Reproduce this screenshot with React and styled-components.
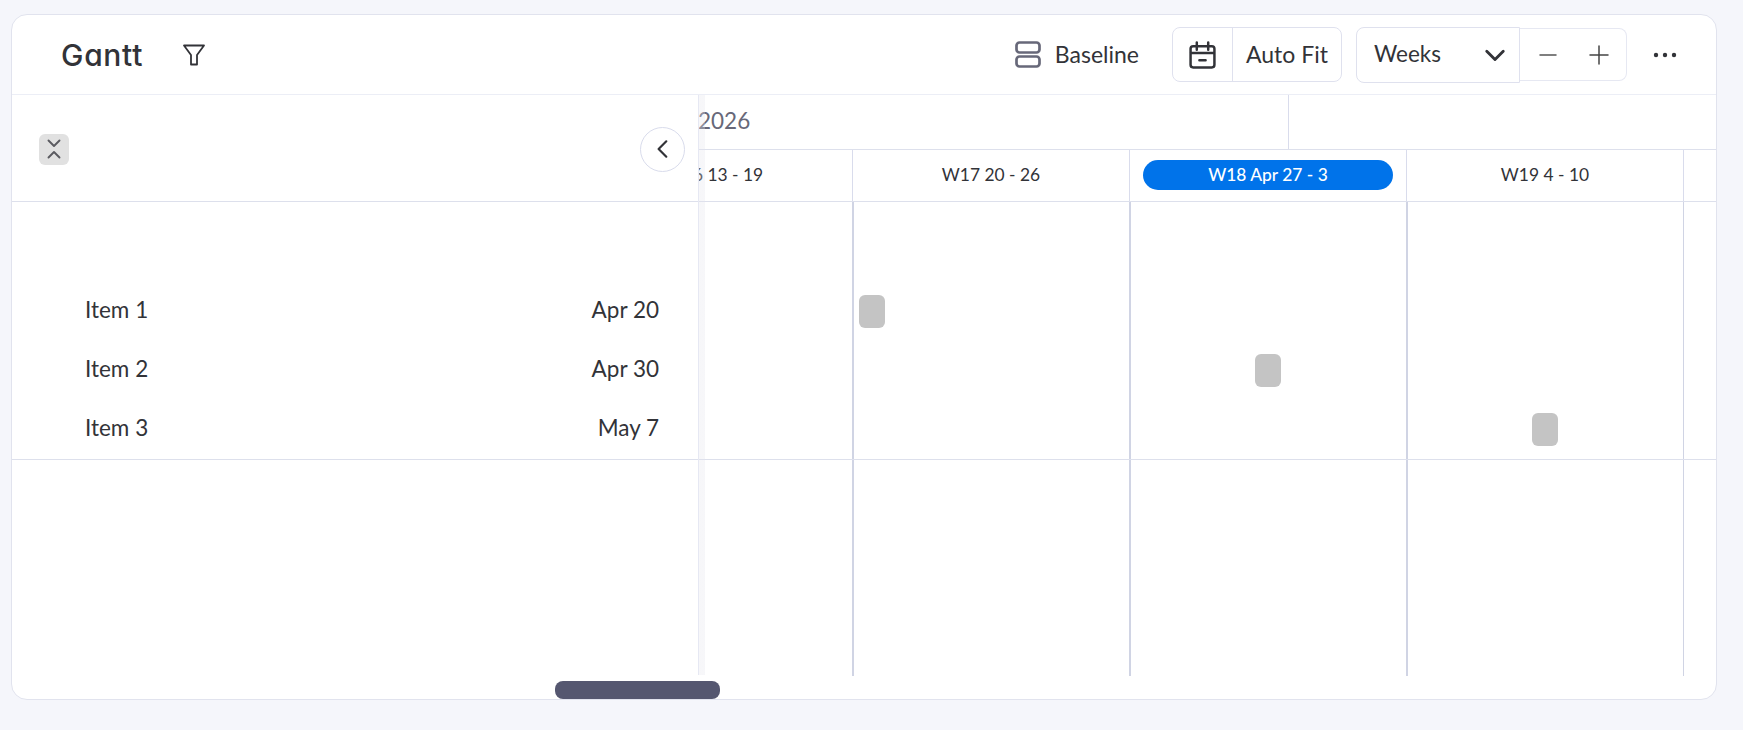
import styled, { createGlobalStyle } from "styled-components";

const GlobalStyle = createGlobalStyle`
  body {
    margin: 0;
    background: #f5f6fb;
    font-family: "Lato", "Liberation Sans", sans-serif;
    color: #323338;
  }
`

const Page = styled.div`
  padding: 14px 26px 30px 11px;
`
const Card = styled.div`
  position: relative;
  height: 686px;
  box-sizing: border-box;
  background: #fff;
  border: 1px solid #e1e3ee;
  border-radius: 16px;
  overflow: hidden;
`
const Header = styled.div`
  display: flex;
  align-items: center;
  height: 80px;
  box-sizing: border-box;
  border-bottom: 1px solid #eceef6;
  padding: 0 38px 0 49px;
`
const Title = styled.h1`
  margin: 0;
  width: 83px;
  font-family: "Inter", sans-serif;
  font-feature-settings: "cv11";
  font-size: 30px;
  font-weight: 500;
  letter-spacing: 0.7px;
`
const IconButton = styled.div`
  display: flex;
  align-items: center;
  justify-content: center;
  margin-left: ${(p) => p.$left || 0}px;
`
const Tools = styled.div`
  display: flex;
  align-items: center;
  margin-left: auto;
`
const Baseline = styled.div`
  display: flex;
  align-items: center;
  gap: 14px;
  font-size: 23px;
  margin-right: 33px;
`
const ToolLabel = styled.span`
  padding-bottom: 2px;
`
const AutoFit = styled.div`
  display: flex;
  height: 55px;
  box-sizing: border-box;
  border: 1px solid #dfe1ee;
  border-radius: 8px;
  margin-right: 14px;
`
const CalendarCell = styled.div`
  display: flex;
  align-items: center;
  justify-content: center;
  width: 59px;
  border-right: 1px solid #dfe1ee;
`
const FitLabel = styled.div`
  display: flex;
  align-items: center;
  justify-content: center;
  width: 108px;
  font-size: 23px;
`
const WeeksSelect = styled.div`
  display: flex;
  align-items: center;
  justify-content: space-between;
  width: 164px;
  height: 56px;
  box-sizing: border-box;
  border: 1px solid #dfe1ee;
  border-radius: 8px 0 0 8px;
  padding: 0 13px 0 17px;
  font-size: 22.5px;
`
const ZoomBox = styled.div`
  display: flex;
  align-items: center;
  justify-content: space-between;
  width: 107px;
  height: 53px;
  box-sizing: border-box;
  border: 1px solid #e6e8f2;
  border-left: 0;
  border-radius: 0 8px 8px 0;
  padding: 0 17px 0 18px;
`
const Body = styled.div`
  display: flex;
  height: 604px;
`
const LeftPanel = styled.div`
  width: 686px;
  flex-shrink: 0;
`
const LeftHead = styled.div`
  display: flex;
  align-items: center;
  justify-content: space-between;
  height: 107px;
  box-sizing: border-box;
  border-bottom: 1px solid #dde0ec;
  padding: 2px 13px 0 27px;
`
const CollapseButton = styled.div`
  display: flex;
  align-items: center;
  justify-content: center;
  width: 30px;
  height: 31px;
  border-radius: 6px;
  background: #e1e1e1;
`
const BackButton = styled.div`
  display: flex;
  align-items: center;
  justify-content: center;
  width: 45px;
  height: 45px;
  box-sizing: border-box;
  background: #fff;
  border: 1px solid #d9dcec;
  border-radius: 50%;
  position: relative;
  z-index: 3;
`
const Rows = styled.div`
  margin-top: 79px;
  padding-bottom: 1px;
  border-bottom: 1px solid #dde0ec;
`
const ItemRow = styled.div`
  display: flex;
  align-items: center;
  justify-content: space-between;
  height: 59px;
  box-sizing: border-box;
  padding: 0 39px 2px 73px;
  font-size: 22.5px;
`
const Timeline = styled.div`
  position: relative;
  flex: 1;
  min-width: 0;
  overflow: hidden;
  &::before {
    content: "";
    position: absolute;
    top: 0;
    bottom: 24px;
    left: -1px;
    width: 8px;
    z-index: 2;
    background: linear-gradient(to right, #e6e8f3 2px, rgba(228, 228, 236, 0.3) 2px);
  }
`
const YearRow = styled.div`
  display: flex;
  height: 55px;
  box-sizing: border-box;
  border-bottom: 1px solid #dde0ec;
`
const YearCell = styled.div`
  display: flex;
  align-items: center;
  width: 591px;
  box-sizing: border-box;
  border-right: 1px solid #d9dcec;
  padding: 0 0 3px 0;
  font-size: 22.5px;
  color: #676879;
`
const Track = styled.div`
  margin-left: -122px;
  width: 1385px;
`
const WeekRow = styled.div`
  display: grid;
  grid-template-columns: repeat(5, 277px);
  height: 52px;
  box-sizing: border-box;
  border-bottom: 1px solid #dde0ec;
`
const WeekCell = styled.div`
  display: flex;
  align-items: center;
  justify-content: center;
  box-sizing: border-box;
  border-right: 1px solid #d9dcec;
  padding-bottom: 2px;
  font-size: 17.4px;
`
const CurrentWeek = styled.div`
  display: flex;
  align-items: center;
  justify-content: center;
  width: 250px;
  height: 30px;
  border-radius: 15px;
  background: #0073ea;
  color: #fff;
  font-weight: 500;
`
const GridLines = styled.div`
  display: grid;
  grid-template-columns: repeat(5, 277px);
  height: 474px;
`
const GridColumn = styled.div`
  box-sizing: border-box;
  border-right: ${(p) => (p.$thin ? "1px" : "2px")} solid #d0d4e4;
  margin-right: ${(p) => (p.$thin ? 0 : -1)}px;
`
const BarLayer = styled.div`
  position: absolute;
  left: 0;
  right: 0;
  top: 187px;
  border-bottom: 1px solid #dde0ec;
`
const BarRow = styled.div`
  display: flex;
  align-items: center;
  height: 59px;
`
const Bar = styled.div`
  width: 26px;
  height: 33px;
  border-radius: 6px;
  background: #c4c4c4;
  margin-left: ${(p) => p.$left}px;
`
const ScrollThumb = styled.div`
  position: absolute;
  left: 543px;
  bottom: 0;
  width: 165px;
  height: 18px;
  border-radius: 8px;
  background: #555770;
  z-index: 4;
`

const items = [
  { name: "Item 1", date: "Apr 20", left: 161 },
  { name: "Item 2", date: "Apr 30", left: 557 },
  { name: "Item 3", date: "May 7", left: 834 },
]

const weeks = ["W16 13 - 19", "W17 20 - 26", "W18 Apr 27 - 3", "W19 4 - 10", ""]

const FilterIcon = () => (
  <svg width="24" height="24" viewBox="0 0 24 24" fill="none" stroke="#323338" strokeWidth="1.8" strokeLinejoin="round">
    <path d="M2 2.5h20l-7 9.5v9.5H9V12z" />
  </svg>
)

const BaselineIcon = () => (
  <svg width="26" height="27" viewBox="0 0 26 27" fill="none" stroke="#676879" strokeWidth="2.7">
    <rect x="1.5" y="1.5" width="23" height="10" rx="3" />
    <rect x="1.5" y="15.5" width="23" height="10" rx="3" />
  </svg>
)

const CalendarIcon = () => (
  <svg width="27" height="28" viewBox="0 0 26 27" fill="none" stroke="#323338" strokeWidth="2.4" strokeLinecap="round">
    <rect x="1.5" y="5" width="23" height="20.5" rx="2.5" />
    <path d="M7.5 1.5v7M18.5 1.5v7M2 11.5h22M10 18.5h6" />
  </svg>
)

const Chevron = ({ d, size = 20, width = 2, color = "#323338" }) => (
  <svg width={size} height={size} viewBox="0 0 20 20" fill="none" stroke={color} strokeWidth={width} strokeLinecap="round" strokeLinejoin="round">
    <path d={d} />
  </svg>
)

const CollapseIcon = () => (
  <svg width="16" height="20" viewBox="0 0 16 20" fill="none" stroke="#5a5a60" strokeWidth="1.9" strokeLinecap="round" strokeLinejoin="round">
    <path d="M2.5 1.5L8 7l5.5-5.5M2.5 18.5L8 13l5.5 5.5" />
  </svg>
)

const Dots = () => (
  <svg width="26" height="8" viewBox="0 0 26 8" fill="#323338">
    <circle cx="4" cy="4" r="2.2" />
    <circle cx="13" cy="4" r="2.2" />
    <circle cx="22" cy="4" r="2.2" />
  </svg>
)

export default function App() {
  return (
    <Page>
      <GlobalStyle />
      <Card>
        <Header>
          <Title>Gantt</Title>
          <IconButton $left={38}><FilterIcon /></IconButton>
          <Tools>
            <Baseline><BaselineIcon /><ToolLabel>Baseline</ToolLabel></Baseline>
            <AutoFit>
              <CalendarCell><CalendarIcon /></CalendarCell>
              <FitLabel><ToolLabel>Auto Fit</ToolLabel></FitLabel>
            </AutoFit>
            <WeeksSelect>
              <ToolLabel>Weeks</ToolLabel>
              <Chevron d="M2.5 6.5l7.5 7.5 7.5-7.5" size={22} width={2.6} />
            </WeeksSelect>
            <ZoomBox>
              <Chevron d="M2 10h16" size={20} width={1.5} color="#555" />
              <Chevron d="M10 1v18M1 10h18" size={20} width={1.5} color="#444" />
            </ZoomBox>
            <IconButton $left={25}><Dots /></IconButton>
          </Tools>
        </Header>
        <Body>
          <LeftPanel>
            <LeftHead>
              <CollapseButton><CollapseIcon /></CollapseButton>
              <BackButton><Chevron d="M13 3l-7 7 7 7" size={22} width={2} /></BackButton>
            </LeftHead>
            <Rows>
              {items.map((item) => (
                <ItemRow key={item.name}>
                  <span>{item.name}</span>
                  <span>{item.date}</span>
                </ItemRow>
              ))}
            </Rows>
          </LeftPanel>
          <Timeline>
            <YearRow>
              <YearCell>2026</YearCell>
            </YearRow>
            <Track>
              <WeekRow>
                {weeks.map((week, i) => (
                  <WeekCell key={i}>
                    {i === 2 ? <CurrentWeek>{week}</CurrentWeek> : week}
                  </WeekCell>
                ))}
              </WeekRow>
              <GridLines>
                {weeks.map((week, i) => <GridColumn key={i} $thin={i === 3 || i === 4} />)}
              </GridLines>
            </Track>
            <BarLayer>
              {items.map((item) => (
                <BarRow key={item.name}><Bar $left={item.left} /></BarRow>
              ))}
            </BarLayer>
          </Timeline>
        </Body>
        <ScrollThumb />
      </Card>
    </Page>
  )
}
